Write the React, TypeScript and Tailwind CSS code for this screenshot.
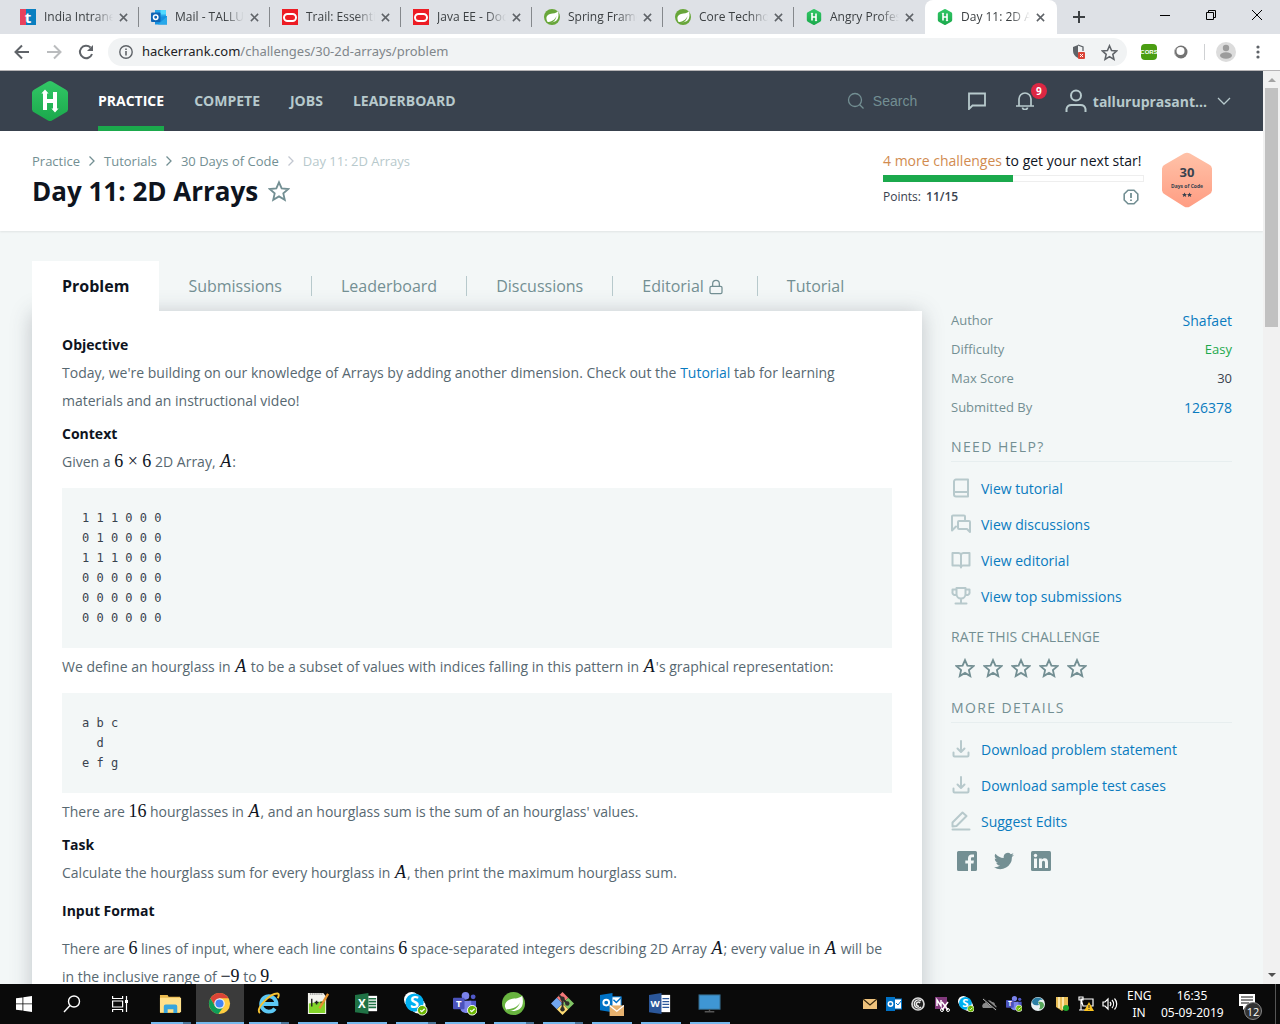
import React from "react";
import { Lock } from "lucide-react";

type IconProps = { className?: string };

/* ---------- Icons ---------- */

function HexLogo({ className = "" }: IconProps) {
  return (
    <svg viewBox="0 0 36 40" className={className} aria-hidden="true">
      <defs>
        <linearGradient id="hexGreen" x1="0" y1="0" x2="0" y2="1">
          <stop offset="0" stopColor="#32c766" />
          <stop offset="1" stopColor="#1ba94c" />
        </linearGradient>
      </defs>
      <path d="M16 .6a4 4 0 0 1 4 0l13.600 7.800A4 4 0 0 1 36 11.600v16.800a4 4 0 0 1-2.400 3.200L20 39.400a4 4 0 0 1-4 0L2.400 31.600A4 4 0 0 1 0 28.400V11.600A4 4 0 0 1 2.400 8.400Z" fill="url(#hexGreen)" />
      <g stroke="#fff" strokeWidth="4" fill="none">
        <path d="M13 11.500V29M23 11v18M13 20h10" />
      </g>
      <path d="M13 8.500l3.600 4H9.400zM23 31.500l3.600-4h-7.200z" fill="#fff" />
    </svg>
  );
}

function Star({ className = "", w = 2 }: IconProps & { w?: number }) {
  return (
    <svg viewBox="0 0 24 24" className={className} fill="none" stroke="currentColor" strokeWidth={w} aria-hidden="true">
      <path d="M12 2.500l2.900 6.700 7.300.6-5.500 4.800 1.600 7.100L12 17.900l-6.300 3.800 1.600-7.100-5.500-4.800 7.300-.6z" />
    </svg>
  );
}

function Chevron({ className = "" }: IconProps) {
  return (
    <svg viewBox="0 0 8 12" className={className} fill="none" stroke="currentColor" strokeWidth="1.300" aria-hidden="true">
      <path d="M1.500 1.500L6 6l-4.500 4.500" />
    </svg>
  );
}

function LineIcon({ className = "", children }: IconProps & { children: React.ReactNode }) {
  return (
    <svg viewBox="0 0 20 20" className={className} fill="none" stroke="currentColor" strokeWidth="2" strokeLinejoin="round" strokeLinecap="round" aria-hidden="true">
      {children}
    </svg>
  );
}

const bookIcon = <path d="M5 1.500h12v17H5a2 2 0 0 1-2-2v-13a2 2 0 0 1 2-2zM3.500 14H17" />;
const discussIcon = <path d="M14 5.500v-3a1 1 0 0 0-1-1H2a1 1 0 0 0-1 1v14l4-4M8 7h10a1 1 0 0 1 1 1v10l-3-3H8a1 1 0 0 1-1-1V8a1 1 0 0 1 1-1z" />;
const openBookIcon = <path d="M10 4.500A3 3 0 0 0 7.500 3H1.500v12.500H8a2 2 0 0 1 2 2 2 2 0 0 1 2-2h6.500V3h-6A3 3 0 0 0 10 4.500zM10 4.500V17" />;
const trophyIcon = <path d="M5.500 2h9v6a4.500 4.500 0 0 1-9 0zM5.500 3.500h-4V6a2.500 2.500 0 0 0 4 2.500M14.500 3.500h4V6a2.500 2.500 0 0 1-4 2.500M10 12.500V17M4.500 17.500h11" />;
const downloadIcon = <path d="M10 2v10.500M6.500 9.500L10 13l3.500-3.500M2.500 13.500v3a1 1 0 0 0 1 1h13a1 1 0 0 0 1-1v-3" />;
const pencilIcon = <path d="M1.500 15.500v-4L11.500 1.500l4 3.500-10 10zM1.500 18.500h17" />;

function CloseX({ className = "" }: IconProps) {
  return (
    <svg viewBox="0 0 10 10" className={className} stroke="currentColor" strokeWidth="1.700" aria-hidden="true">
      <path d="M1 1l8 8M9 1L1 9" />
    </svg>
  );
}

function OracleIcon() {
  return (
    <svg viewBox="0 0 16 16" className="size-4">
      <rect width="16" height="16" fill="#ed1c24" />
      <rect x="2" y="5" width="12" height="7" rx="3.500" fill="none" stroke="#fff" strokeWidth="2" />
    </svg>
  );
}

function SpringIcon({ className = "size-4" }: IconProps) {
  return (
    <svg viewBox="0 0 24 24" className={className}>
      <circle cx="12" cy="12" r="12" fill="#68a63a" />
      <path d="M21 3.500c1.500 6 1 11.500-3 14.500-4 2.500-9 2-12.500 1.500C2 14 3.500 9 9 7.500c5-1 9-.5 12-4z" fill="#fff" />
      <path d="M4.500 19.500c6 0 12-3 14.500-9.500-2 9-8 12-13.500 11z" fill="#68a63a" />
    </svg>
  );
}

function OutlookIcon({ className = "size-4" }: IconProps) {
  return (
    <svg viewBox="0 0 16 16" className={className}>
      <rect x="4" y="1" width="11" height="9" fill="#28a8ea" />
      <rect x="9.500" y="1" width="5.500" height="4.500" fill="#50d9ff" />
      <path d="M4 8l12-1v8.500H4z" fill="#1490df" />
      <path d="M16 7.500L7 15.500h9z" fill="#28a8ea" />
      <rect y="3.500" width="9.500" height="9.500" rx="1" fill="#0f65b5" />
      <circle cx="4.700" cy="8.300" r="2.200" fill="none" stroke="#fff" strokeWidth="1.500" />
    </svg>
  );
}

function IntranetIcon() {
  return (
    <span className="flex size-4 items-center justify-center bg-linear-to-r from-[#e8415c] from-35% to-[#0a7fc0] to-40% text-[15px] leading-none font-bold text-white">t</span>
  );
}

/* ---------- Browser chrome ---------- */

const tabs: { title: string; icon: React.ReactNode }[] = [
  { title: "India Intrane", icon: <IntranetIcon /> },
  { title: "Mail - TALLU", icon: <OutlookIcon /> },
  { title: "Trail: Essentia", icon: <OracleIcon /> },
  { title: "Java EE - Doc", icon: <OracleIcon /> },
  { title: "Spring Frame", icon: <SpringIcon /> },
  { title: "Core Technol", icon: <SpringIcon /> },
  { title: "Angry Profes", icon: <HexLogo className="size-4" /> },
  { title: "Day 11: 2D A", icon: <HexLogo className="size-4" /> },
];

function TabStrip() {
  return (
    <header className="flex h-[34px] shrink-0 bg-[#dee1e6] pl-2 text-[#3c4043]">
      <div className="flex min-w-0 flex-1">
        {tabs.map((t, i) => {
          const active = i === tabs.length - 1;
          return (
            <div
              key={t.title}
              className={
                active
                  ? "flex w-[132px] min-w-0 items-center rounded-t-lg bg-white pr-3 pl-3"
                  : "flex w-[131px] min-w-0 items-center pl-3"
              }
            >
              <span className="shrink-0">{t.icon}</span>
              <span className="ml-2 w-[75px] shrink-0 text-[12px] whitespace-nowrap [mask-image:linear-gradient(to_right,black_66%,transparent_92%)]">{t.title}</span>
              <button aria-label={`Close ${t.title}`} className="shrink-0 text-[#5f6368]">
                <CloseX className="size-[9px]" />
              </button>
              {!active && i < tabs.length - 2 && <span className="ml-auto h-5 w-px bg-[#85888c]" />}
            </div>
          );
        })}
        <button aria-label="New tab" className="flex w-11 items-center justify-center">
          <svg viewBox="0 0 12 12" className="size-3" stroke="#3c4043" strokeWidth="2"><path d="M6 0v12M0 6h12" /></svg>
        </button>
      </div>
      <div className="flex shrink-0 items-center gap-9 pr-[18px] pb-1">
        <button aria-label="Minimize"><svg viewBox="0 0 10 10" className="size-[10px]" stroke="#000"><path d="M0 5.500h10" /></svg></button>
        <button aria-label="Restore"><svg viewBox="0 0 10 10" className="size-[10px]" fill="none" stroke="#000"><path d="M.5 2.500h7v7h-7zM2.500 2.500v-2h7v7h-2" /></svg></button>
        <button aria-label="Close"><svg viewBox="0 0 10 10" className="size-[10px]" stroke="#000"><path d="M0 0l10 10M10 0L0 10" /></svg></button>
      </div>
    </header>
  );
}

function Toolbar() {
  return (
    <div className="flex h-[37px] shrink-0 items-center border-b border-[#b6b4b6] bg-white pr-5 pl-[14px] text-[#5f6368]">
      <button aria-label="Back">
        <svg viewBox="0 0 16 16" className="size-4" fill="none" stroke="currentColor" strokeWidth="2"><path d="M15 8H2M8 1.500L1.500 8 8 14.500" /></svg>
      </button>
      <button aria-label="Forward" className="ml-4 text-[#babcbe]">
        <svg viewBox="0 0 16 16" className="size-4" fill="none" stroke="currentColor" strokeWidth="2"><path d="M1 8h13M8 1.500L14.500 8 8 14.500" /></svg>
      </button>
      <button aria-label="Reload" className="ml-4">
        <svg viewBox="0 0 16 16" className="size-4" fill="none" stroke="currentColor" strokeWidth="2"><path d="M14 10a6.200 6.200 0 1 1-1.500-6.500" /><path d="M15 1v6H9z" fill="currentColor" stroke="none" /></svg>
      </button>
      <div className="ml-[14px] flex h-7 flex-1 items-center rounded-full bg-[#f1f3f4] pr-[9px] pl-[11px]">
        <svg viewBox="0 0 14 14" className="size-[14px]" fill="none" stroke="currentColor" strokeWidth="1.400"><circle cx="7" cy="7" r="6.200" /><path d="M7 6v4.500M7 3.500V5" strokeWidth="1.600" /></svg>
        <a href="#url" className="ml-[9px] flex-1 font-['Noto_Sans',sans-serif] text-[13px] text-[#80868b]">
          <span className="text-[#202124]">hackerrank.com</span>/challenges/30-2d-arrays/problem
        </a>
        <svg viewBox="0 0 16 16" className="mr-[14px] size-4">
          <path d="M7 1L2 3v4c0 3 2 5.500 5 7z" fill="#5f6368" />
          <path d="M7 1l5 2v4" fill="none" stroke="#5f6368" strokeWidth="1.300" />
          <rect x="7" y="8" width="7" height="7" rx="1" fill="#db4437" />
          <path d="M9 10l3 3M12 10l-3 3" stroke="#fff" />
        </svg>
        <button aria-label="Bookmark"><Star className="size-[17px]" w={2.2} /></button>
      </div>
      <span className="ml-[14px] flex h-4 w-4 items-center justify-center rounded-sm bg-[#4a9d12] font-['Liberation_Sans',sans-serif] text-[6px] leading-none font-bold text-white">CORS</span>
      <svg viewBox="0 0 14 14" className="ml-[17px] size-[14px]"><circle cx="7" cy="7" r="6.500" fill="#737373" /><circle cx="6.500" cy="6" r="4" fill="#fff" /><path d="M2 3a6 6 0 0 0 1 9" fill="none" stroke="#bbb" /></svg>
      <span className="ml-4 h-4 w-px bg-[#cfd1d3]" />
      <svg viewBox="0 0 20 20" className="ml-[11px] size-5"><circle cx="10" cy="10" r="10" fill="#dcdcdc" /><circle cx="10" cy="6" r="3.200" fill="#9c9c9c" /><ellipse cx="10" cy="13.500" rx="6" ry="3.200" fill="#9c9c9c" /></svg>
      <button aria-label="Menu" className="ml-[20px]">
        <svg viewBox="0 0 4 14" className="h-[14px] w-1" fill="currentColor"><circle cx="2" cy="2" r="1.600" /><circle cx="2" cy="7" r="1.600" /><circle cx="2" cy="12" r="1.600" /></svg>
      </button>
    </div>
  );
}

/* ---------- Site header ---------- */

function SiteNav() {
  return (
    <nav className="flex h-[60px] shrink-0 items-center bg-[#39424e] px-8 text-[14px] font-bold text-[#b7c9cc]">
      <a href="#home" aria-label="HackerRank"><HexLogo className="h-10 w-9" /></a>
      <div className="ml-[30px] flex h-full gap-[30px]">
        <a href="#practice" className="flex items-center border-b-[5px] border-[#1ba94c] pt-[3px] text-white">PRACTICE</a>
        <a href="#compete" className="flex items-center pb-[2px]">COMPETE</a>
        <a href="#jobs" className="flex items-center pb-[2px]">JOBS</a>
        <a href="#leaderboard" className="flex items-center pb-[2px]">LEADERBOARD</a>
      </div>
      <label className="ml-auto flex items-center text-[#738f93]">
        <svg viewBox="0 0 18 18" className="size-[18px]" fill="none" stroke="currentColor" strokeWidth="1.300"><circle cx="8" cy="8" r="6.500" /><path d="M12.500 12.500l4 4" /></svg>
        <input aria-label="Search" placeholder="Search" className="ml-2 w-[95px] bg-transparent font-['Liberation_Sans',sans-serif] text-[14px] font-normal outline-none placeholder:text-[#738f93]" />
      </label>
      <button aria-label="Messages">
        <svg viewBox="0 0 18 18" className="size-[18px]" fill="none" stroke="currentColor" strokeWidth="1.800"><path d="M1 1.500h16v12H4.500L1 17z" /></svg>
      </button>
      <button aria-label="Notifications" className="relative ml-[30px]">
        <svg viewBox="0 0 18 18" className="size-[18px]" fill="none" stroke="currentColor" strokeWidth="1.700"><path d="M0 14h18M3 14V7a6 6 0 0 1 12 0v7M6.500 15.500a2.500 2 0 0 0 5 0" /></svg>
        <span className="absolute -top-[9px] left-[15px] flex size-4 items-center justify-center rounded-full bg-[#dc2743] text-[10px] leading-none text-white">9</span>
      </button>
      <button className="ml-[31px] flex items-center">
        <svg viewBox="0 0 22 24" className="h-6 w-[22px]" fill="none" stroke="currentColor" strokeWidth="2"><circle cx="11" cy="6.500" r="5" /><path d="M1.500 23v-3a5 5 0 0 1 5-4h9a5 5 0 0 1 5 4v3" /></svg>
        <span className="ml-[6px]">talluruprasant...</span>
        <svg viewBox="0 0 14 8" className="ml-[10px] h-2 w-[14px]" fill="none" stroke="currentColor" strokeWidth="1.300"><path d="M1 1l6 6 6-6" /></svg>
      </button>
    </nav>
  );
}

function TitleBar() {
  return (
    <section className="flex h-[100px] shrink-0 justify-between bg-white pt-[20px] pr-[51px] pl-8 shadow-[0_1px_2px_rgba(0,0,0,0.08)]">
      <div>
        <div className="flex items-center gap-2 text-[13px] leading-5 text-[#738f93]">
          <a href="#practice">Practice</a>
          <Chevron className="h-3 w-2" />
          <a href="#tutorials">Tutorials</a>
          <Chevron className="h-3 w-2" />
          <a href="#30days">30 Days of Code</a>
          <Chevron className="h-3 w-2 text-[#c2c7d0]" />
          <span className="text-[#b7c9cc]">Day 11: 2D Arrays</span>
        </div>
        <div className="flex items-center gap-[10px]">
          <h1 className="text-[26px] leading-10 font-bold text-[#0e141e]">Day 11: 2D Arrays</h1>
          <button aria-label="Bookmark challenge" className="text-[#738f93]"><Star className="size-[22px]" /></button>
        </div>
      </div>
      <div className="flex gap-[18px]">
        <div className="w-[261px]">
          <p className="text-[14px] leading-5 text-[#0e141e]"><span className="text-[#d18b4f]">4 more challenges</span> to get your next star!</p>
          <div className="mt-1 h-[7px] border border-[#eeeeee]">
            <div className="-mt-px -ml-px h-[7px] w-1/2 bg-[#1ba94c]" />
          </div>
          <div className="mt-[5px] flex items-center justify-between pr-[5px] text-[12px] leading-5 text-[#39424e]">
            <span>Points: <b className="ml-[2px] font-semibold">11/15</b></span>
            <svg viewBox="0 0 16 16" className="size-4" fill="none" stroke="#738f93" strokeWidth="1.600"><path d="M5 1.200h6L14.800 5v6L11 14.800H5L1.200 11V5z" /><path d="M8 4v5M8 10.500V12" strokeWidth="1.800" /></svg>
          </div>
        </div>
        <div className="relative mt-px h-[56px] w-[50px]">
          <svg viewBox="0 0 50 56" className="h-[56px] w-[50px]" aria-hidden="true">
            <defs><linearGradient id="badge" x1="0" y1="0" x2="0" y2="1"><stop offset="0" stopColor="#ffc2a8" /><stop offset="1" stopColor="#ff9d83" /></linearGradient></defs>
            <path d="M22 1.500a6 6 0 0 1 6 0l19 11a5 5 0 0 1 3 4v22a5 5 0 0 1-3 4l-19 12a6 6 0 0 1-6 0l-19-12a5 5 0 0 1-3-4v-22a5 5 0 0 1 3-4z" fill="url(#badge)" />
            <path d="M22.500 40.500l.8 1.600 1.700.1-1.300 1.100.5 1.700-1.700-.9-1.600.9.4-1.700-1.300-1.100 1.800-.1zM27.500 40.500l.8 1.600 1.700.1-1.300 1.100.5 1.700-1.700-.9-1.600.9.4-1.700-1.300-1.100 1.800-.1z" fill="#39424e" />
          </svg>
          <div className="absolute inset-x-0 top-3 text-center font-bold text-[#39424e]">
            <div className="text-[13px] leading-4">30</div>
            <div className="text-[5px] leading-3">Days of Code</div>
          </div>
        </div>
      </div>
    </section>
  );
}

/* ---------- Problem ---------- */

const challengeTabs = ["Submissions", "Leaderboard", "Discussions", "Editorial", "Tutorial"];

function ChallengeTabs() {
  return (
    <div className="flex h-[50px] items-center text-[16px] text-[#738f93]">
      <a href="#problem" className="flex h-full items-center bg-white px-[30px] font-bold text-[#0e141e]">Problem</a>
      {challengeTabs.map((t, i) => (
        <a
          key={t}
          href={"#" + t.toLowerCase()}
          className={
            i < challengeTabs.length - 1
              ? "flex h-5 items-center border-r border-[#b7c9cc] pr-[29px] pl-[29px]"
              : "flex h-5 items-center pl-[29px]"
          }
        >
          {t}
          {t === "Editorial" && <Lock className="mt-[2px] mr-1 ml-1 size-4" strokeWidth={1.9} />}
        </a>
      ))}
    </div>
  );
}

function Num({ children }: { children: React.ReactNode }) {
  return <span className="font-['Liberation_Serif',serif] text-[18px] leading-none text-[#0e141e]">{children}</span>;
}

function A() {
  return <i className="px-px font-['Liberation_Serif',serif] text-[18px] leading-none text-[#0e141e]">A</i>;
}

function Heading({ children }: { children: React.ReactNode }) {
  return <h2 className="font-bold text-[#0e141e]">{children}</h2>;
}

function Code({ children }: { children: string }) {
  return (
    <pre className="mt-3 mb-[5px] bg-[#f3f7f7] p-5 font-['DejaVu_Sans_Mono',monospace] text-[12px] leading-5 text-[#39424e]">{children}</pre>
  );
}

function Problem() {
  return (
    <article className="bg-white px-[30px] pt-5 pb-10 text-[14px] leading-7 text-[#576871] shadow-[0_2px_20px_rgba(57,66,78,0.28)]">
      <Heading>Objective</Heading>
      <p className="mb-[5px]">
        Today, we're building on our knowledge of Arrays by adding another dimension. Check out the{" "}
        <a href="#tutorial" className="text-[#097bbf]">Tutorial</a> tab for learning materials and an instructional video!
      </p>
      <Heading>Context</Heading>
      <p>Given a <Num>6 × 6</Num> 2D Array, <A />:</p>
      <Code>{"1 1 1 0 0 0\n0 1 0 0 0 0\n1 1 1 0 0 0\n0 0 0 0 0 0\n0 0 0 0 0 0\n0 0 0 0 0 0"}</Code>
      <p>We define an hourglass in <A /> to be a subset of values with indices falling in this pattern in <A />'s graphical representation:</p>
      <Code>{"a b c\n  d\ne f g"}</Code>
      <p className="mb-[5px]">There are <Num>16</Num> hourglasses in <A />, and an hourglass sum is the sum of an hourglass' values.</p>
      <Heading>Task</Heading>
      <p className="mb-[10px]">Calculate the hourglass sum for every hourglass in <A />, then print the maximum hourglass sum.</p>
      <Heading>Input Format</Heading>
      <p className="mt-[10px]">
        There are <Num>6</Num> lines of input, where each line contains <Num>6</Num> space-separated integers describing 2D Array <A />; every value in <A /> will be in the inclusive range of <Num>−9</Num> to <Num>9</Num>.
      </p>
    </article>
  );
}

/* ---------- Sidebar ---------- */

function SideLink({ icon, children }: { icon: React.ReactNode; children: string }) {
  return (
    <a href={"#" + children.toLowerCase().replace(/ /g, "-")} className="flex h-9 items-center text-[14px] text-[#097bbf]">
      <LineIcon className="mr-[10px] size-5 text-[#b7c9cc]">{icon}</LineIcon>
      {children}
    </a>
  );
}

function SideHeading({ children }: { children: string }) {
  return <h3 className="mb-2 flex h-[30px] items-center border-b border-[#e7eeef] text-[14px] tracking-widest">{children}</h3>;
}

function Sidebar() {
  const row = "flex h-[29px] items-center justify-between";
  return (
    <aside className="w-[281px] shrink-0 pt-[45px] text-[#738f93]">
      <dl className="text-[13px]">
        <div className={row}><dt>Author</dt><dd className="text-[14px]"><a href="#author" className="text-[#097bbf]">Shafaet</a></dd></div>
        <div className={row}><dt>Difficulty</dt><dd className="text-[#1ba94c]">Easy</dd></div>
        <div className={row}><dt>Max Score</dt><dd className="text-[#39424e]">30</dd></div>
        <div className={row}><dt>Submitted By</dt><dd className="text-[14px]"><a href="#submitted" className="text-[#097bbf]">126378</a></dd></div>
      </dl>
      <div className="mt-[10px]">
        <SideHeading>NEED HELP?</SideHeading>
        <SideLink icon={bookIcon}>View tutorial</SideLink>
        <SideLink icon={discussIcon}>View discussions</SideLink>
        <SideLink icon={openBookIcon}>View editorial</SideLink>
        <SideLink icon={trophyIcon}>View top submissions</SideLink>
      </div>
      <h3 className="mt-[11px] text-[14px] leading-6">RATE THIS CHALLENGE</h3>
      <div className="mt-[9px] flex gap-2 pl-1">
        {[1, 2, 3, 4, 5].map((n) => (
          <button key={n} aria-label={`Rate ${n}`}><Star className="size-5" w={2.2} /></button>
        ))}
      </div>
      <div className="mt-[15px]">
        <SideHeading>MORE DETAILS</SideHeading>
        <SideLink icon={downloadIcon}>Download problem statement</SideLink>
        <SideLink icon={downloadIcon}>Download sample test cases</SideLink>
        <SideLink icon={pencilIcon}>Suggest Edits</SideLink>
      </div>
      <div className="mt-3 flex gap-[17px] pl-[6px]">
        <a href="#facebook" aria-label="Facebook">
          <svg viewBox="0 0 20 20" className="size-5" fill="currentColor"><path d="M1.500 0h17A1.500 1.500 0 0 1 20 1.500v17a1.500 1.500 0 0 1-1.500 1.500H14v-7.500h2.500l.4-3H14V7.700c0-.9.300-1.400 1.500-1.400H17V3.500c-.3 0-1.200-.1-2.300-.1-2.200 0-3.700 1.300-3.700 3.800v2.300H8.300v3H11V20H1.500A1.500 1.500 0 0 1 0 18.500v-17A1.500 1.500 0 0 1 1.500 0z" /></svg>
        </a>
        <a href="#twitter" aria-label="Twitter">
          <svg viewBox="0 0 24 24" className="size-5" fill="currentColor"><path d="M23.950 4.600a10 10 0 0 1-2.800.8 4.900 4.900 0 0 0 2.100-2.700 10 10 0 0 1-3.100 1.200 4.900 4.900 0 0 0-8.400 4.500A14 14 0 0 1 1.700 3.200a4.900 4.900 0 0 0 1.500 6.500 4.900 4.900 0 0 1-2.200-.6 4.900 4.900 0 0 0 3.900 4.900 5 5 0 0 1-2.200.1 4.900 4.900 0 0 0 4.600 3.400A9.900 9.900 0 0 1 0 19.500a14 14 0 0 0 21.500-12.400c1-.7 1.800-1.500 2.450-2.500z" /></svg>
        </a>
        <a href="#linkedin" aria-label="LinkedIn">
          <svg viewBox="0 0 20 20" className="size-5"><rect width="20" height="20" rx="1.500" fill="currentColor" /><path d="M3 7.500h3V17H3zM8 7.500h2.800v1.300c.6-1 1.600-1.500 2.900-1.500 2.600 0 3.300 1.700 3.300 4V17h-3v-5c0-1.300-.2-2.300-1.500-2.300S11 10.700 11 12v5H8z" fill="#f3f7f7" /><circle cx="4.500" cy="4.500" r="1.700" fill="#f3f7f7" /></svg>
        </a>
      </div>
    </aside>
  );
}

function Scrollbar() {
  return (
    <div className="flex w-[17px] shrink-0 flex-col items-center justify-between bg-[#f1f1f1]" aria-hidden="true">
      <div className="flex w-full flex-col items-center">
        <svg viewBox="0 0 8 4" className="mt-[7px] mb-[6px] h-1 w-2" fill="#a3a3a3"><path d="M0 4l4-4 4 4z" /></svg>
        <div className="h-[239px] w-[13px] bg-[#c1c1c1]" />
      </div>
      <svg viewBox="0 0 8 4" className="mb-[7px] h-1 w-2" fill="#505050"><path d="M0 0l4 4 4-4z" /></svg>
    </div>
  );
}

/* ---------- Taskbar ---------- */

function Check({ x, y, r = 5 }: { x: number; y: number; r?: number }) {
  return (
    <g>
      <circle cx={x} cy={y} r={r} fill="#6bb700" stroke="#fff" />
      <path d={`M${x - 2} ${y}l1.500 1.500 3-3`} fill="none" stroke="#fff" strokeWidth="1.300" />
    </g>
  );
}

const teamsArt = (
  <>
    <circle cx="13" cy="4" r="4" fill="#7b83eb" />
    <circle cx="21" cy="5" r="2.500" fill="#5059c9" />
    <path d="M17 9h7v7a4 4 0 0 1-6 3z" fill="#5059c9" />
    <path d="M8 9h11v8a6 6 0 0 1-11 2z" fill="#7b83eb" />
    <rect y="6" width="12" height="12" rx="1" fill="#4b53bc" />
    <text x="6" y="15.500" textAnchor="middle" fontSize="10" fontWeight="700" fill="#fff">T</text>
    <Check x={20} y={19} />
  </>
);

const skypeArt = (
  <>
    <circle cx="8" cy="8" r="8" fill="#fff" />
    <circle cx="15" cy="15" r="7.500" fill="#fff" />
    <circle cx="11" cy="11" r="9.500" fill="#00aff0" />
    <text x="11" y="17" textAnchor="middle" fontSize="17" fontWeight="700" fill="#fff">S</text>
    <Check x={19} y={19} />
  </>
);

const taskApps: { name: string; art: React.ReactNode; active?: boolean; multi?: boolean }[] = [
  {
    name: "File Explorer",
    multi: true,
    art: (
      <>
        <path d="M1 3h8l1 2h12v17H1z" fill="#e9b94e" />
        <path d="M1 6h22v15H1z" fill="#ffe08a" />
        <path d="M5 22v-7a2 2 0 0 1 2-2h10a2 2 0 0 1 2 2v7h-4v-4H9v4z" fill="#37a5dd" />
      </>
    ),
  },
  {
    name: "Chrome",
    active: true,
    art: (
      <>
        <circle cx="12" cy="12" r="11" fill="#ffcd40" />
        <path d="M2.500 6.500A11 11 0 0 1 21.500 6.500H12L7.200 14.700z" fill="#db4437" />
        <path d="M2.500 6.500a11 11 0 0 0 8.300 16.400L16.700 14.500H7.200z" fill="#0f9d58" />
        <circle cx="12" cy="12" r="5.500" fill="#f1f1f1" />
        <circle cx="12" cy="12" r="4.200" fill="#4285f4" />
      </>
    ),
  },
  {
    name: "Internet Explorer",
    multi: true,
    art: (
      <>
        <path d="M4.500 12.500h15.800a8 8 0 1 0-1.600 4.800" fill="none" stroke="#5cc8f5" strokeWidth="4" />
        <path d="M3 22C-2 17 14 1 21.500 1.500c2 .3 1 3.500 0 5" fill="none" stroke="#f7c331" strokeWidth="2" />
      </>
    ),
  },
  {
    name: "Notepad++",
    art: (
      <>
        <path d="M2 1h16l3 4v18H2z" fill="#f4f4ee" />
        <path d="M3 12l17-3v13H3z" fill="#83d52a" />
        <path d="M4 2h13" stroke="#777" strokeWidth="1.500" strokeDasharray="1 1" />
        <path d="M6 7v8M9 11h4M15 11h4M11 9v4" stroke="#222" strokeWidth="1.500" />
        <path d="M23 2l-9 15" stroke="#e49330" strokeWidth="2.500" />
      </>
    ),
  },
  {
    name: "Excel",
    art: (
      <>
        <rect x="11" y="4" width="12" height="16" fill="#fff" />
        <path d="M14 7h8M14 10h8M14 13h8M14 16h8" stroke="#207245" strokeWidth="1.700" />
        <path d="M0 3l14-2v22L0 21z" fill="#207245" />
        <text x="7" y="17" textAnchor="middle" fontSize="12" fontWeight="700" fill="#fff">X</text>
      </>
    ),
  },
  { name: "Skype", multi: true, art: skypeArt },
  { name: "Teams", art: teamsArt },
  {
    name: "Spring Tool Suite",
    multi: true,
    art: (
      <>
        <circle cx="12" cy="12" r="12" fill="#68b33f" />
        <path d="M21 4c1.500 6 1 11.500-3 14-4 2.500-9 2-13 1C1 14 3.500 9 9 7.500c5-1 9-.5 12-3.500z" fill="#fff" />
        <path d="M4.500 18c6 0 12-2 14.500-7.500-2 7-8 10-13.500 9z" fill="#68b33f" />
      </>
    ),
  },
  {
    name: "Git",
    multi: true,
    art: (
      <>
        <path d="M12 0l6 6-6 6-6-6z" fill="#f47878" />
        <path d="M18 6l6 6-6 6-6-6z" fill="#80c565" />
        <path d="M12 12l6 6-6 6-6-6z" fill="#ffdc73" />
        <path d="M6 6l6 6-6 6-6-6z" fill="#72a7ee" />
        <path d="M8 3l4 4v12M12 7l5 5" fill="none" stroke="#302d2a" strokeWidth="2" />
        <circle cx="12" cy="7" r="2.300" fill="#302d2a" /><circle cx="17" cy="12" r="2.300" fill="#302d2a" /><circle cx="12" cy="18" r="2.300" fill="#302d2a" />
      </>
    ),
  },
  {
    name: "Outlook",
    art: (
      <>
        <rect x="11" y="5" width="11" height="11" fill="#fff" stroke="#0072c6" />
        <path d="M0 3l13-2v20L0 19z" fill="#0072c6" />
        <circle cx="6.500" cy="11" r="3" fill="none" stroke="#fff" strokeWidth="2" />
        <path d="M14 8l3 3 5-5" fill="none" stroke="#0072c6" strokeWidth="1.500" />
        <rect x="10" y="14" width="15" height="11" fill="#e7b26f" />
        <path d="M10 14l7.500 6 7.500-6" fill="none" stroke="#fff" strokeWidth="1.300" />
      </>
    ),
  },
  {
    name: "Word",
    art: (
      <>
        <rect x="11" y="3" width="11" height="18" fill="#fff" />
        <path d="M14 7h7M14 10h7M14 13h7M14 16h7" stroke="#2b579a" strokeWidth="1.300" />
        <path d="M0 3l13-2v22L0 21z" fill="#2b579a" />
        <text x="6.500" y="16" textAnchor="middle" fontSize="10" fontWeight="700" fill="#fff">W</text>
      </>
    ),
  },
  {
    name: "Desktop",
    art: (
      <>
        <rect x="1" y="3" width="22" height="15" fill="#3f96d4" stroke="#33627f" />
        <path d="M12 18v2M7 20.500h10" stroke="#555" strokeWidth="1.500" />
      </>
    ),
  },
];

const trayIcons: { name: string; art: React.ReactNode }[] = [
  { name: "Mail", art: <><rect x="1" y="3" width="14" height="10" fill="#eec27c" /><path d="M1 3l7 6 7-6" fill="none" stroke="#3a2a10" strokeWidth="1.200" /></> },
  { name: "Outlook", art: <><rect x="8" y="3" width="7.500" height="10" fill="#fff" stroke="#0072c6" /><rect y="1" width="9" height="14" fill="#0072c6" /><circle cx="4.500" cy="8" r="2.200" fill="none" stroke="#fff" strokeWidth="1.500" /><path d="M10 7l2 2 3-4" fill="none" stroke="#0072c6" /></> },
  { name: "Audio", art: <><circle cx="8" cy="8" r="6" fill="#222" stroke="#d8d8d8" strokeWidth="1.700" /><path d="M11 5a4 4 0 1 0 0 6M10 7a2 2 0 1 0-1 3" fill="none" stroke="#eee" strokeWidth="1.500" /></> },
  { name: "OneNote clip", art: <><rect x="1" y="1" width="12" height="12" fill="#80397b" /><path d="M3 10V4l4 6V4M8 6l6 8M14 6l-6 8" stroke="#fff" strokeWidth="1.500" fill="none" /><circle cx="8" cy="14" r="1.500" fill="none" stroke="#fff" /><circle cx="14" cy="14" r="1.500" fill="none" stroke="#fff" /></> },
  { name: "Skype", art: <g transform="scale(.67)">{skypeArt}</g> },
  { name: "OneDrive offline", art: <><path d="M1 12a3 3 0 0 1 2-5 4 4 0 0 1 7-1 3 3 0 0 1 3 3 2 2 0 0 1 1 3z" fill="#8b8b8b" /><path d="M1 2l14 12" stroke="#111" strokeWidth="2.500" /><path d="M1 3l13 11" stroke="#bbb" /></> },
  { name: "Teams", art: <g transform="scale(.65)">{teamsArt}</g> },
  { name: "VPN", art: <><circle cx="8" cy="8" r="7" fill="#e9f1f3" /><path d="M2 5c3-5 9-4 11-1-4-1-6 2-4 5-4 1-7 0-7-4z" fill="#2b7fa5" /><path d="M8 6c3-1 6 0 6 3s-3 5-5 4c2-2 1-4-1-7z" fill="#57a65a" /></> },
  { name: "Defender", art: <><path d="M2 1h12v9l-6 5-6-4z" fill="#e8bd55" /><path d="M5 1v11M9 1v12" stroke="#fff3c2" strokeWidth="1.500" /><circle cx="12" cy="12" r="3" fill="#20a82c" /></> },
  { name: "Network", art: <><path d="M3 3h12v7H5zM1 1h4v3H1zM3 4v10M1 14h6" fill="none" stroke="#fff" strokeWidth="1.200" /><path d="M11 6l5 9H6z" fill="#fcc41f" /><path d="M11 9v3M11 13v1" stroke="#222" /></> },
  { name: "Volume", art: <path d="M1 6h2l3-3v10l-3-3H1zM8 6a3 3 0 0 1 0 4M10 4a6 6 0 0 1 0 8M12.500 2.500a8 8 0 0 1 0 11" fill="none" stroke="#fff" strokeWidth="1.200" /> },
];

function Taskbar() {
  return (
    <footer className="flex h-10 shrink-0 bg-[#0a0a0a] text-white">
      <button aria-label="Start" className="flex w-12 items-center justify-center">
        <svg viewBox="0 0 16 16" className="size-4" fill="#fff"><path d="M0 2.300L6.500 1.400v6H0zM7.300 1.300L16 0v7.400H7.300zM0 8.300h6.500v6.200L0 13.700zM7.300 8.300H16V16l-8.700-1.300z" /></svg>
      </button>
      <button aria-label="Search Windows" className="flex w-12 items-center justify-center">
        <svg viewBox="0 0 18 18" className="size-[18px]" fill="none" stroke="#fff" strokeWidth="1.400"><circle cx="11" cy="6.500" r="5.500" /><path d="M7 10.500L1 17" /></svg>
      </button>
      <button aria-label="Task view" className="flex w-[51px] items-center justify-center pr-1">
        <svg viewBox="0 0 16 16" className="size-4" fill="none" stroke="#fff" strokeWidth="1.200"><path d="M.6 0v2.500h10V0M.6 16v-2.500h10V16M.6 5h10v6H.6zM14.500 0v16" /><path d="M14.500 4v3" strokeWidth="3" /></svg>
      </button>
      {taskApps.map((a) => (
        <button
          key={a.name}
          aria-label={a.name}
          className={
            a.active
              ? "mr-px flex w-12 flex-col items-center justify-between bg-[#3b3b3b]"
              : "mr-px flex w-12 flex-col items-center justify-between px-1"
          }
        >
          <svg viewBox="0 0 25 25" className="mt-2 size-6">{a.art}</svg>
          <span className="flex h-[2px] w-full bg-[#76b9ed]">{a.multi && <span className="ml-auto w-2 bg-[#4a7599]" />}</span>
        </button>
      ))}
      <div className="ml-auto flex items-center gap-2">
        {trayIcons.map((t) => (
          <svg key={t.name} viewBox="0 0 16 16" className="size-4" role="img" aria-label={t.name}>{t.art}</svg>
        ))}
      </div>
      <div className="flex items-center text-center font-['Noto_Sans',sans-serif] text-[12px] leading-[17px]">
        <div className="ml-[9px] w-6"><div>ENG</div><div>IN</div></div>
        <div className="ml-[10px] w-[62px] whitespace-nowrap"><div>16:35</div><div>05-09-2019</div></div>
      </div>
      <button aria-label="12 notifications" className="relative ml-[15px] flex w-[37px] items-center">
        <svg viewBox="0 0 18 18" className="mb-1 size-[18px]"><path d="M1 1h16v12H9l-4 4v-4H1z" fill="#fff" /><path d="M3 4h12M3 7h12M3 10h8" stroke="#111" /></svg>
        <span className="absolute top-[18px] left-[6px] flex size-[18px] items-center justify-center rounded-full border border-[#888] bg-[#333] text-[11px] leading-none">12</span>
      </button>
      <span className="mr-1 w-px bg-[#555]" />
    </footer>
  );
}

export default function App() {
  return (
    <div className="flex h-screen flex-col overflow-hidden bg-white font-['Open_Sans',sans-serif]">
      <TabStrip />
      <Toolbar />
      <div className="flex min-h-0 flex-1">
        <main className="min-w-0 flex-1 overflow-hidden bg-[#f3f7f7]">
          <SiteNav />
          <TitleBar />
          <div className="flex gap-[29px] pt-[30px] pr-[31px] pl-8">
            <div className="min-w-0 flex-1">
              <ChallengeTabs />
              <Problem />
            </div>
            <Sidebar />
          </div>
        </main>
        <Scrollbar />
      </div>
      <Taskbar />
    </div>
  );
}
